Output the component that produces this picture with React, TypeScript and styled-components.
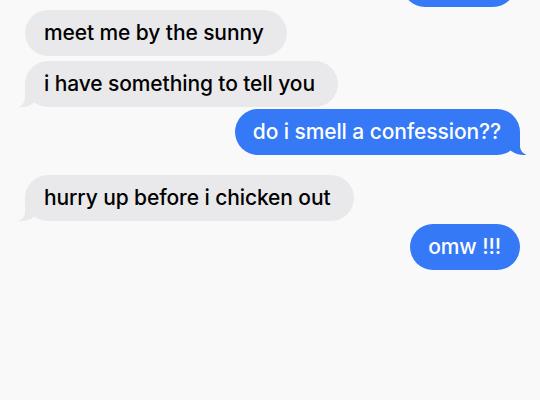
import React from "react";
import styled, { createGlobalStyle, css } from "styled-components";

const Global = createGlobalStyle`
  html, body { margin: 0; padding: 0; background: #f9f9f9; }
  body { font-family: Inter, "Noto Sans", "Liberation Sans", sans-serif; }
`;

const PAGE = "#f9f9f9";
const GRAY = "#e9e9eb";
const BLUE = "#3579f6";

const Thread = styled.div`
  width: 540px;
  height: 400px;
  overflow: hidden;
  box-sizing: border-box;
  padding: 0 20px 0 25px;
  display: flex;
  flex-direction: column;
  background: ${PAGE};
`;

type BubbleProps = { $me?: boolean; $tail?: boolean; $gap: number; $shift?: number; $width?: number };

const Bubble = styled.div<BubbleProps>`
  position: relative;
  box-sizing: border-box;
  height: 46px;
  ${(p) => p.$width && `width: ${p.$width}px;`}
  display: flex;
  align-items: center;
  padding: ${(p) => (p.$me ? "0 19px 1px 18px" : "0 23px 1px 19px")};
  border-radius: 23px;
  margin-top: ${(p) => p.$gap}px;
  margin-right: ${(p) => p.$shift ?? 0}px;
  font-size: 21px;
  font-weight: 500;
  letter-spacing: -0.1px;
  white-space: nowrap;
  align-self: ${(p) => (p.$me ? "flex-end" : "flex-start")};
  background: ${(p) => (p.$me ? BLUE : GRAY)};
  color: ${(p) => (p.$me ? "#ffffff" : "#000000")};

  ${(p) =>
    p.$tail &&
    (p.$me
      ? css`
          &::before {
            content: "";
            position: absolute;
            bottom: 0;
            right: -10px;
            width: 24px;
            height: 22px;
            background: ${BLUE};
            border-bottom-left-radius: 18px 14px;
          }
          &::after {
            content: "";
            position: absolute;
            bottom: -1px;
            right: -14px;
            width: 14px;
            height: 26px;
            background: ${PAGE};
            border-bottom-left-radius: 11px 10px;
          }
        `
      : css`
          &::before {
            content: "";
            position: absolute;
            bottom: 0;
            left: -10px;
            width: 24px;
            height: 22px;
            background: ${GRAY};
            border-bottom-right-radius: 18px 14px;
          }
          &::after {
            content: "";
            position: absolute;
            bottom: -1px;
            left: -14px;
            width: 14px;
            height: 26px;
            background: ${PAGE};
            border-bottom-right-radius: 11px 10px;
          }
        `)}
`;

const Text = styled.span`
  position: relative;
  z-index: 1;
`;

export default function App() {
  return (
    <>
      <Global />
      <Thread>
        <Bubble $me $gap={-39} $shift={4} $width={114} aria-hidden="true" />
        <Bubble $gap={3}>
          <Text>meet me by the sunny</Text>
        </Bubble>
        <Bubble $gap={5} $tail>
          <Text>i have something to tell you</Text>
        </Bubble>
        <Bubble $me $gap={2} $tail>
          <Text>do i smell a confession??</Text>
        </Bubble>
        <Bubble $gap={20} $tail>
          <Text>hurry up before i chicken out</Text>
        </Bubble>
        <Bubble $me $gap={3}>
          <Text>omw !!!</Text>
        </Bubble>
      </Thread>
    </>
  );
}
